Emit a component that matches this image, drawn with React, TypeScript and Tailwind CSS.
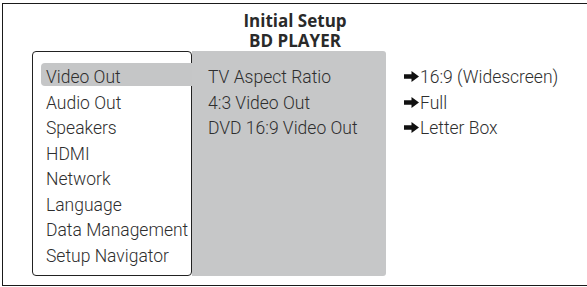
import React from 'react';

const menuItems = [
    'Video Out',
    'Audio Out',
    'Speakers',
    'HDMI',
    'Network',
    'Language',
    'Data Management',
    'Setup Navigator',
];

const settings = [
    { label: 'TV Aspect Ratio', value: '16:9 (Widescreen)' },
    { label: '4:3 Video Out', value: 'Full' },
    { label: 'DVD 16:9 Video Out', value: 'Letter Box' },
];

const Arrow: React.FC = () => (
    <svg width="15" height="11" viewBox="0 0 15 11" className="shrink-0 mt-[8px] mr-[1px]">
        <path d="M0 3.2 H7.5 V0 L15 5.5 L7.5 11 V7.8 H0 Z" fill="#111" />
    </svg>
);

const App: React.FC = () => {
    return (
        <div className="w-[587px] h-[287px] bg-white pt-[3px] pl-[2px] overflow-hidden font-['Roboto',sans-serif]">
            <div className="w-[585px] h-[283px] border-l-[1.5px] border-t-[1.5px] border-b-[1.5px] border-[#1a1a1a]">

                {/* Title */}
                <div className="pt-[6.5px] text-center font-['Open_Sans',sans-serif] font-bold text-[17px] leading-[20px] text-[#2a2a2a]">
                    <div>Initial Setup</div>
                    <div>BD PLAYER</div>
                </div>

                {/* Menu area */}
                <div className="flex mt-[0.5px] ml-[29px] h-[225px] text-[17.5px] font-light text-[#2e2e2e]">

                    {/* Left menu */}
                    <div className="w-[160px] h-full border border-[#222] rounded-[4px] pt-[11px] pl-[8px] flex flex-col gap-[2.5px]">
                        {menuItems.map((item, i) => (
                            <div
                                key={item}
                                className={
                                    i === 0
                                        ? 'relative z-10 h-[23px] pl-[5px] -mr-[1px] bg-[#c5c6c7] rounded-l-[4px] leading-[28px] whitespace-nowrap'
                                        : 'h-[23px] pl-[5px] leading-[28px] whitespace-nowrap'
                                }
                            >
                                {item}
                            </div>
                        ))}
                    </div>

                    {/* Sub settings */}
                    <div className="w-[194px] h-full bg-[#c6c7c8] rounded-r-[3px] pt-[12px] pl-[16px] flex flex-col gap-[2.5px]">
                        {settings.map((s) => (
                            <div key={s.label} className="h-[23px] leading-[28px] whitespace-nowrap">
                                {s.label}
                            </div>
                        ))}
                    </div>

                    {/* Values */}
                    <div className="pt-[12px] pl-[18px] flex flex-col gap-[2.5px]">
                        {settings.map((s) => (
                            <div key={s.value} className="h-[23px] flex items-start whitespace-nowrap">
                                <Arrow />
                                <span className="leading-[28px]">{s.value}</span>
                            </div>
                        ))}
                    </div>
                </div>
            </div>
        </div>
    );
};

export default App;
